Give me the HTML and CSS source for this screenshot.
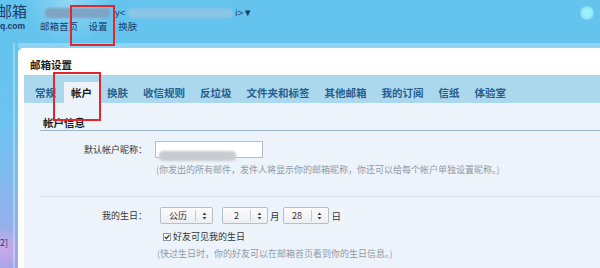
FILE: index.html
```html
<!DOCTYPE html>
<html lang="zh-CN">
  <head>
    <meta charset="UTF-8" />
    <meta name="viewport" content="width=device-width, initial-scale=1.0" />
    <title>邮箱设置</title>
    <link rel="stylesheet" href="styles.css">
  </head>

  <body>
    <div class="page">
      <div class="top">
        <div class="logo">
          <div class="logo-name">邮箱</div>
          <div class="logo-domain">q.com</div>
        </div>
        <div class="user">
          <div class="user-line">
            <span class="blur blur-name"></span>
            <span class="nick">y&lt;</span>
            <span class="blur blur-mail"></span>
            <span class="nick nick-end">i&gt;▼</span>
          </div>
          <div class="links">
            <a href="#">邮箱首页</a><span class="sep">|</span><a href="#">设置</a><span class="sep">|</span><a href="#">换肤</a>
          </div>
        </div>
      </div>

      <div class="main">
        <div class="side"><span class="side-link">2]</span></div>
        <div class="frame">
          <div class="panel">
            <div class="title">邮箱设置</div>
            <div class="tabs">
              <span class="tab">常规</span>
              <span class="tab tab-on">帐户</span>
              <span class="tab">换肤</span>
              <span class="tab">收信规则</span>
              <span class="tab">反垃圾</span>
              <span class="tab">文件夹和标签</span>
              <span class="tab">其他邮箱</span>
              <span class="tab">我的订阅</span>
              <span class="tab">信纸</span>
              <span class="tab">体验室</span>
            </div>

            <div class="content">
              <div class="sec-title">帐户信息</div>

              <div class="row row-nick">
                <div class="label">默认帐户昵称：</div>
                <div class="field">
                  <div class="input"><span class="blur blur-input"></span></div>
                  <div class="hint">(你发出的所有邮件，发件人将显示你的邮箱昵称，你还可以给每个帐户单独设置昵称。)</div>
                </div>
              </div>

              <div class="row row-birth">
                <div class="label">我的生日：</div>
                <div class="field">
                  <div class="pickers">
                    <span class="sel sel-cal">
                      <span class="sel-text">公历</span>
                      <span class="sel-arrow"><svg width="5" height="8" viewBox="0 0 5 8"><path d="M2.5 0.5 L4.5 3 L0.5 3 Z M2.5 7.5 L4.5 5 L0.5 5 Z" fill="#444"/></svg></span>
                    </span>
                    <span class="sel sel-num">
                      <span class="sel-text">2</span>
                      <span class="sel-arrow"><svg width="5" height="8" viewBox="0 0 5 8"><path d="M2.5 0.5 L4.5 3 L0.5 3 Z M2.5 7.5 L4.5 5 L0.5 5 Z" fill="#444"/></svg></span>
                    </span>
                    <span class="unit">月</span>
                    <span class="sel sel-num">
                      <span class="sel-text">28</span>
                      <span class="sel-arrow"><svg width="5" height="8" viewBox="0 0 5 8"><path d="M2.5 0.5 L4.5 3 L0.5 3 Z M2.5 7.5 L4.5 5 L0.5 5 Z" fill="#444"/></svg></span>
                    </span>
                    <span class="unit unit-day">日</span>
                  </div>
                  <div class="check">
                    <svg class="box" width="8" height="8" viewBox="0 0 8 8">
                      <rect x="0.5" y="0.5" width="7" height="7" fill="#fff" stroke="#8a96a3"/>
                      <path d="M1.8 4 L3.3 5.6 L6.3 2.2" fill="none" stroke="#333" stroke-width="1.3"/>
                    </svg>
                    <span>好友可见我的生日</span>
                  </div>
                  <div class="hint hint-birth">(快过生日时，你的好友可以在邮箱首页看到你的生日信息。)</div>
                </div>
              </div>
            </div>
          </div>
        </div>
      </div>

      <span class="bubble"></span>
      <div class="mark mark-set"></div>
      <div class="mark mark-tab"></div>
    </div>
  </body>
</html>
```

FILE: styles.css
```css
body {
  margin: 0;
  font-family: "Noto Sans CJK SC", "Noto Sans", sans-serif;
}

.page {
  position: relative;
  width: 600px;
  height: 268px;
  overflow: hidden;
  background: radial-gradient(circle at 70px 0, rgba(255, 255, 255, 0.3), transparent 45px), #64c4ee;
}

/* header */

.top {
  display: flex;
  height: 43px;
  color: #1c3d6b;
}

.logo {
  width: 40px;
  margin-left: -3px;
  padding-top: 2px;
}

.logo-name {
  font-size: 15px;
  line-height: 18px;
}

.logo-domain {
  margin: 1px 0 0 3px;
  font-family: "Liberation Sans", sans-serif;
  font-size: 8.5px;
  font-weight: bold;
  line-height: 10px;
}

.user {
  padding: 6px 0 0 3px;
}

.user-line {
  display: flex;
  align-items: center;
  height: 13px;
}

.blur {
  display: inline-block;
  height: 10px;
  border-radius: 4px;
  filter: blur(1.2px);
}

.blur-name {
  width: 65px;
  margin-left: 5px;
  background: #7fa3c3;
}

.blur-mail {
  width: 105px;
  margin-left: 3px;
  background: #8ac6e8;
}

.nick {
  margin-left: 5px;
  font-family: "Liberation Sans", sans-serif;
  font-size: 9.5px;
}

.nick-end {
  margin-left: 2px;
}

.links {
  line-height: 14px;
  font-size: 9.5px;
}

.links a {
  color: #1c3d6b;
  text-decoration: none;
}

.sep {
  margin: 0 4px;
  color: #8bbfe0;
}

.bubble {
  position: absolute;
  left: 580px;
  top: 6px;
  width: 14px;
  height: 14px;
  border-radius: 50%;
  background: radial-gradient(circle, #9af0fb 40%, rgba(140, 230, 250, 0));
}

/* body */

.main {
  display: flex;
  height: 225px;
  background: linear-gradient(180deg, #64c4ee 0, #6cc3ef 35%, #86b8ed 65%, #a5a4e7 100%);
}

.side {
  width: 13px;
  border-right: 2px solid rgba(200, 236, 252, 0.45);
  padding-top: 194px;
  background: radial-gradient(circle at 4px 205px, rgba(225, 170, 235, 0.7), transparent 22px);
}

.side-link {
  display: block;
  font-size: 9px;
  line-height: 12px;
  color: #1c3d6b;
}

.frame {
  flex: 1;
  margin-left: 3px;
  padding-top: 5px;
  background: linear-gradient(#90d4f4, #90d4f4) no-repeat top / 100% 5px;
}

.panel {
  height: 100%;
  box-sizing: border-box;
  padding: 10px 0 0 6px;
  background: #fff;
  border-top-left-radius: 5px;
}

.title {
  padding-left: 6px;
  font-size: 10.5px;
  font-weight: bold;
  line-height: 14px;
  color: #1e1e1e;
}

.tabs {
  display: flex;
  align-items: flex-end;
  height: 28px;
  margin-top: 3px;
  padding-left: 3.5px;
  background: #acd8ed;
}

.tab {
  height: 21px;
  padding: 0 7.5px;
  font-size: 10.5px;
  font-weight: bold;
  line-height: 21px;
  color: #255f8f;
  white-space: nowrap;
}

.tab-on {
  background: #edf3fa;
  color: #1a1a1a;
}

.content {
  height: 200px;
  padding-left: 16px;
  background: #edf3fa;
}

.sec-title {
  padding: 13px 0 0 3px;
  font-size: 10.5px;
  font-weight: bold;
  line-height: 14px;
  color: #222;
  border-bottom: 1px solid #9bb6cd;
}

.row {
  display: flex;
}

.row-nick {
  padding: 10px 0 20px;
  border-bottom: 1px solid #d3e0ec;
}

.row-birth {
  padding-top: 10px;
}

.label {
  width: 107px;
  text-align: right;
  font-size: 9px;
  line-height: 17px;
  color: #333;
}

.field {
  margin-left: 8px;
}

.input {
  width: 106px;
  height: 15px;
  background: #fff;
  border: 1px solid #b6bec7;
}

.blur-input {
  width: 77px;
  height: 10px;
  margin: 3px 0 0 3px;
  background: #c8ccd2;
}

.hint {
  margin: 6px 0 0 1px;
  font-size: 9px;
  line-height: 12px;
  color: #8d9aa8;
  white-space: nowrap;
}

.hint-birth {
  margin: 5px 0 0 2px;
}

.pickers {
  display: flex;
  align-items: center;
  margin-left: 5px;
  font-size: 9.5px;
  color: #333;
}

.sel {
  display: flex;
  height: 15px;
  border: 1px solid #b8bfc6;
  border-radius: 2px;
  background: linear-gradient(#fcfcfd, #eceef1);
}

.sel-cal {
  width: 51px;
  margin-right: 9px;
}

.sel-num {
  width: 44px;
}

.sel-text {
  flex: 1;
  text-align: center;
  font-size: 9px;
  line-height: 15px;
}

.sel-arrow {
  display: flex;
  align-items: center;
  justify-content: center;
  width: 16px;
  margin: 2px 0;
  border-left: 1px solid #c4cad0;
}

.unit {
  margin: 0 3px 0 2px;
}

.unit-day {
  margin: 0 0 0 3px;
}

.check {
  display: flex;
  align-items: center;
  margin: 7px 0 0 8px;
  font-size: 9px;
  line-height: 12px;
  color: #333;
}

.box {
  margin-right: 2px;
}

/* red highlight boxes drawn over the screenshot */

.mark {
  position: absolute;
  box-sizing: border-box;
  border: 2px solid #e3262b;
}

.mark-set {
  left: 70px;
  top: 5px;
  width: 45px;
  height: 41px;
}

.mark-tab {
  left: 53px;
  top: 72px;
  width: 48px;
  height: 49px;
}
```
